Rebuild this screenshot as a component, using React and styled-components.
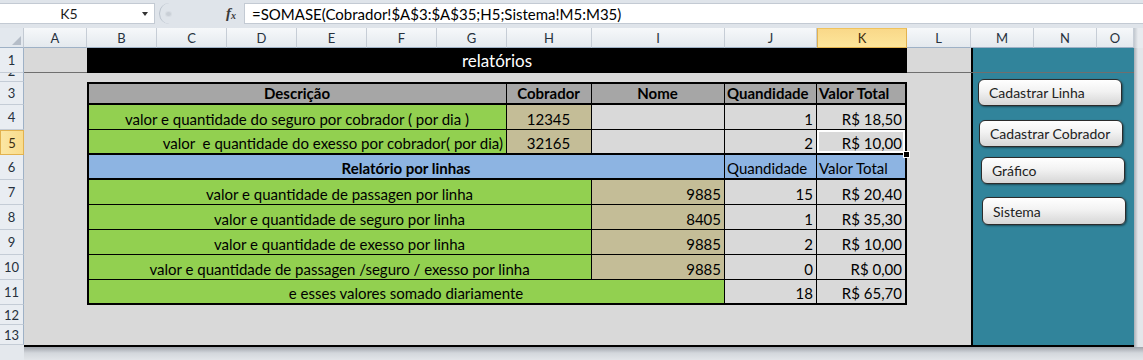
import React from "react";
import styled, { createGlobalStyle, css } from "styled-components";

const GlobalStyle = createGlobalStyle`
  html, body { margin: 0; padding: 0; }
  body {
    width: 1143px;
    height: 360px;
    overflow: hidden;
    background: #e4e8ed;
    font-family: Lato, "Open Sans", "DejaVu Sans", sans-serif;
    color: #000;
  }
`;

// widths of: row header, A..O, right edge strip
const COL_WIDTHS = [24, 63, 70, 70, 70, 70, 70, 70, 85, 133, 92, 90, 64, 63, 63, 37, 9];
const LETTERS = "ABCDEFGHIJKLMNO".split("");
const ROW_HEIGHTS = [25, 9, 23, 25, 25, 25, 25, 25, 25, 25, 25, 20, 20];
const ACTIVE_COL = "K";
const ACTIVE_ROW = 5;

const GREEN = "#92d050";
const TAN = "#c4bd97";
const BLUE = "#8db4e2";
const HEAD = "#a6a6a6";

/* ---------- formula bar ---------- */

const FormulaBar = styled.div`
  display: flex;
  height: 28px;
  box-sizing: border-box;
  padding: 3px 0 4px;
  background: #dfe4ea;
`;

const NameBox = styled.div`
  display: flex;
  align-items: center;
  width: 155px;
  background: #fff;
  border: 1px solid #c3cad3;
  border-left: none;
  box-sizing: border-box;
`;

const NameValue = styled.span`
  flex: 1;
  text-align: center;
  font-size: 14px;
  color: #1b1b1b;
`;

const DropArrow = styled.span`
  width: 0;
  height: 0;
  margin: 0 6px 0 4px;
  border-left: 3px solid transparent;
  border-right: 3px solid transparent;
  border-top: 4px solid #333;
`;

const Grip = styled.div`
  display: flex;
  align-items: center;
  width: 60px;
  margin-left: 4px;
  padding-left: 6px;
  box-sizing: border-box;
  border-left: 1px solid #b9c1cb;
  border-radius: 11px 0 0 11px;
`;

const Knob = styled.span`
  width: 5px;
  height: 4px;
  border-radius: 50%;
  background: #c9cfd6;
  box-shadow: 0 0 0 1px #d7dce2;
`;

const FxLabel = styled.div`
  display: flex;
  align-items: center;
  justify-content: center;
  width: 24px;
  font-family: "Liberation Serif", serif;
  font-style: italic;
  font-weight: 700;
  font-size: 15px;
  color: #3a3a3a;
  i { font-style: italic; }
  small { font-size: 10px; margin-top: 4px; }
`;

const FormulaInput = styled.div`
  flex: 1;
  display: flex;
  align-items: center;
  margin-left: 1px;
  padding-left: 7px;
  background: #fff;
  border: 1px solid #c3cad3;
  border-right: none;
  font-size: 15px;
  color: #000;
`;

/* ---------- sheet grid ---------- */

const Sheet = styled.div`
  display: grid;
  grid-template-columns: ${COL_WIDTHS.map((w) => w + "px").join(" ")};
  grid-template-rows: 20px ${ROW_HEIGHTS.map((h) => h + "px").join(" ")} 2px 13px;
`;

const Corner = styled.div`
  grid-column: 1;
  grid-row: 1;
  position: relative;
  background: #e3e8ee;
  border-right: 1px solid #c3cad3;
  border-bottom: 1px solid #9eb1c6;
  &::after {
    content: "";
    position: absolute;
    right: 2px;
    bottom: 2px;
    border-style: solid;
    border-width: 0 0 9px 9px;
    border-color: transparent transparent #b5bdc8 transparent;
  }
`;

const ColHeader = styled.div`
  grid-row: 1;
  grid-column: ${(p) => p.$col};
  display: flex;
  align-items: center;
  justify-content: center;
  font-size: 13px;
  color: #27313d;
  background: linear-gradient(#f6f8fa, #e4e9ee);
  border-right: 1px solid #c6cdd6;
  border-bottom: 1px solid #9eb1c6;
  box-sizing: border-box;
  ${(p) =>
    p.$active &&
    css`
      background: linear-gradient(#f9d889, #fde69b);
      border: 1px solid #e2b24f;
      border-top-color: #f0c25c;
      color: #3b2c10;
    `}
`;

const EdgeHeader = styled.div`
  grid-row: 1;
  grid-column: 17;
  background: linear-gradient(90deg, #c2c8cf, #e8ebef 4px);
`;

const RowHeader = styled.div`
  grid-column: 1;
  grid-row: ${(p) => p.$row + 1};
  display: flex;
  justify-content: center;
  align-items: ${(p) => (p.$clipped ? "flex-end" : "center")};
  overflow: hidden;
  font-size: 13px;
  color: #27313d;
  background: #e9edf2;
  border-bottom: 1px solid #c4ccd6;
  border-right: 1px solid #9eb1c6;
  box-sizing: border-box;
  span { line-height: 20px; }
  ${(p) =>
    p.$active &&
    css`
      background: linear-gradient(90deg, #fbe6a3, #f9dc8c);
      border: 1px solid #e2b24f;
      color: #3b2c10;
    `}
`;

const Canvas = styled.div`
  grid-column: 2 / 14;
  grid-row: 2 / 15;
  background: #d9d9d9;
`;

const TealPanel = styled.div`
  grid-column: 14 / 17;
  grid-row: 2 / 15;
  display: flex;
  flex-direction: column;
  align-items: flex-start;
  padding-top: 31px;
  background: #31849b;
  border-left: 2px solid #000;
`;

const FreezeLine = styled.div`
  grid-column: 2 / 17;
  grid-row: 2;
  align-self: end;
  height: 1px;
  background: #6f6f6f;
`;

const EdgeStrip = styled.div`
  grid-column: 17;
  grid-row: 2 / 16;
  background: linear-gradient(90deg, #a8aeb5, #e3e6ea 4px);
`;

const BottomLine = styled.div`
  grid-column: 2 / 17;
  grid-row: 15;
  background: #000;
`;

const BottomShade = styled.div`
  grid-column: 2 / 18;
  grid-row: 16;
  background: linear-gradient(#9fa4ab, #d3d7dc 6px, #e2e5e9);
`;

const Title = styled.div`
  grid-column: 3 / 13;
  grid-row: 2;
  display: flex;
  align-items: flex-end;
  justify-content: center;
  padding-bottom: 2px;
  box-sizing: border-box;
  background: #000;
  color: #fff;
  font-size: 17px;
`;

/* ---------- report table ---------- */

const Report = styled.div`
  grid-column: 3 / 13;
  grid-row: 4 / 13;
  display: grid;
  grid-template-columns: 418px 85px 133px 92px 88px;
  grid-template-rows: 21px repeat(7, 25px) 23px;
  border: 2px solid #000;
  font-size: 15px;
`;

const Cell = styled.div`
  grid-column: span ${(p) => p.$span || 1};
  display: flex;
  align-items: flex-end;
  justify-content: ${(p) =>
    p.$align === "right" ? "flex-end" : p.$align === "left" ? "flex-start" : "center"};
  padding: 0 3px 1px 2px;
  box-sizing: border-box;
  white-space: pre;
  background: ${(p) => p.$bg || "transparent"};
  font-weight: ${(p) => (p.$bold ? 700 : 400)};
  border-right: ${(p) => (p.$last ? 0 : 1)}px solid #000;
  border-bottom: ${(p) => (p.$edge ?? 1)}px solid #000;
`;

const SelectedCell = styled(Cell)`
  position: relative;
  box-shadow: inset 0 0 0 2px #fff;
  &::after {
    content: "";
    position: absolute;
    right: -5px;
    bottom: -5px;
    width: 5px;
    height: 5px;
    background: #000;
    border: 1px solid #fff;
  }
`;

/* ---------- buttons on the teal panel ---------- */

const SheetButton = styled.button`
  width: 144px;
  height: ${(p) => p.$h || 27}px;
  margin: ${(p) => p.$top}px 0 0 ${(p) => p.$left}px;
  padding: 0 0 0 10px;
  text-align: left;
  font-family: inherit;
  font-size: 14px;
  color: #222;
  background: linear-gradient(#ffffff, #f2f2f2 45%, #d6d6d6);
  border: 1px solid #2c2c2c;
  border-radius: 6px;
  box-shadow: 1px 1px 2px rgba(0, 0, 0, 0.45);
`;

const LINE_ROWS = [
  ["valor e quantidade de passagen por linha", "9885", "15", "R$ 20,40"],
  ["valor e quantidade de seguro por linha", "8405", "1", "R$ 35,30"],
  ["valor e quantidade de exesso por linha", "9885", "2", "R$ 10,00"],
  ["valor e quantidade de passagen /seguro / exesso por linha", "9885", "0", "R$ 0,00"],
];

const BUTTONS = [
  { label: "Cadastrar Linha", top: 0, left: 5 },
  { label: "Cadastrar Cobrador", top: 14, left: 6 },
  { label: "Gráfico", top: 10, left: 8 },
  { label: "Sistema", top: 13, left: 9, h: 28 },
];

export default function App() {
  return (
    <>
      <GlobalStyle />
      <FormulaBar>
        <NameBox>
          <NameValue>K5</NameValue>
          <DropArrow />
        </NameBox>
        <Grip>
          <Knob />
        </Grip>
        <FxLabel>
          <i>f</i>
          <small>x</small>
        </FxLabel>
        <FormulaInput>=SOMASE(Cobrador!$A$3:$A$35;H5;Sistema!M5:M35)</FormulaInput>
      </FormulaBar>

      <Sheet>
        <Corner />
        {LETTERS.map((l, i) => (
          <ColHeader key={l} $col={i + 2} $active={l === ACTIVE_COL}>
            {l}
          </ColHeader>
        ))}
        <EdgeHeader />
        {ROW_HEIGHTS.map((h, i) => (
          <RowHeader key={i} $row={i + 1} $clipped={h < 12} $active={i + 1 === ACTIVE_ROW}>
            <span>{i + 1}</span>
          </RowHeader>
        ))}

        <Canvas />
        <TealPanel>
          {BUTTONS.map((b) => (
            <SheetButton key={b.label} $top={b.top} $left={b.left} $h={b.h}>
              {b.label}
            </SheetButton>
          ))}
        </TealPanel>
        <FreezeLine />
        <EdgeStrip />
        <BottomLine />
        <BottomShade />

        <Title>relatórios</Title>

        <Report>
          <Cell $bg={HEAD} $bold $edge={2}>Descrição</Cell>
          <Cell $bg={HEAD} $bold $edge={2}>Cobrador</Cell>
          <Cell $bg={HEAD} $bold $edge={2}>Nome</Cell>
          <Cell $bg={HEAD} $bold $edge={2} $align="left">Quandidade</Cell>
          <Cell $bg={HEAD} $bold $edge={2} $align="left" $last>Valor Total</Cell>

          <Cell $bg={GREEN}>valor e quantidade do seguro por cobrador ( por dia )</Cell>
          <Cell $bg={TAN}>12345</Cell>
          <Cell />
          <Cell $align="right">1</Cell>
          <Cell $align="right" $last>R$ 18,50</Cell>

          <Cell $bg={GREEN} $align="right" $edge={2}>valor  e quantidade do exesso por cobrador( por dia)</Cell>
          <Cell $bg={TAN} $edge={2}>32165</Cell>
          <Cell $edge={2} />
          <Cell $align="right" $edge={2}>2</Cell>
          <SelectedCell $align="right" $edge={2} $last>R$ 10,00</SelectedCell>

          <Cell $bg={BLUE} $bold $span={3} $edge={2}>Relatório por linhas</Cell>
          <Cell $bg={BLUE} $align="left" $edge={2}>Quandidade</Cell>
          <Cell $bg={BLUE} $align="left" $edge={2} $last>Valor Total</Cell>

          {LINE_ROWS.map(([text, code, qty, total]) => (
            <React.Fragment key={text}>
              <Cell $bg={GREEN} $span={2}>{text}</Cell>
              <Cell $bg={TAN} $align="right">{code}</Cell>
              <Cell $align="right">{qty}</Cell>
              <Cell $align="right" $last>{total}</Cell>
            </React.Fragment>
          ))}

          <Cell $bg={GREEN} $span={3} $edge={0}>e esses valores somado diariamente</Cell>
          <Cell $align="right" $edge={0}>18</Cell>
          <Cell $align="right" $edge={0} $last>R$ 65,70</Cell>
        </Report>
      </Sheet>
    </>
  );
}
